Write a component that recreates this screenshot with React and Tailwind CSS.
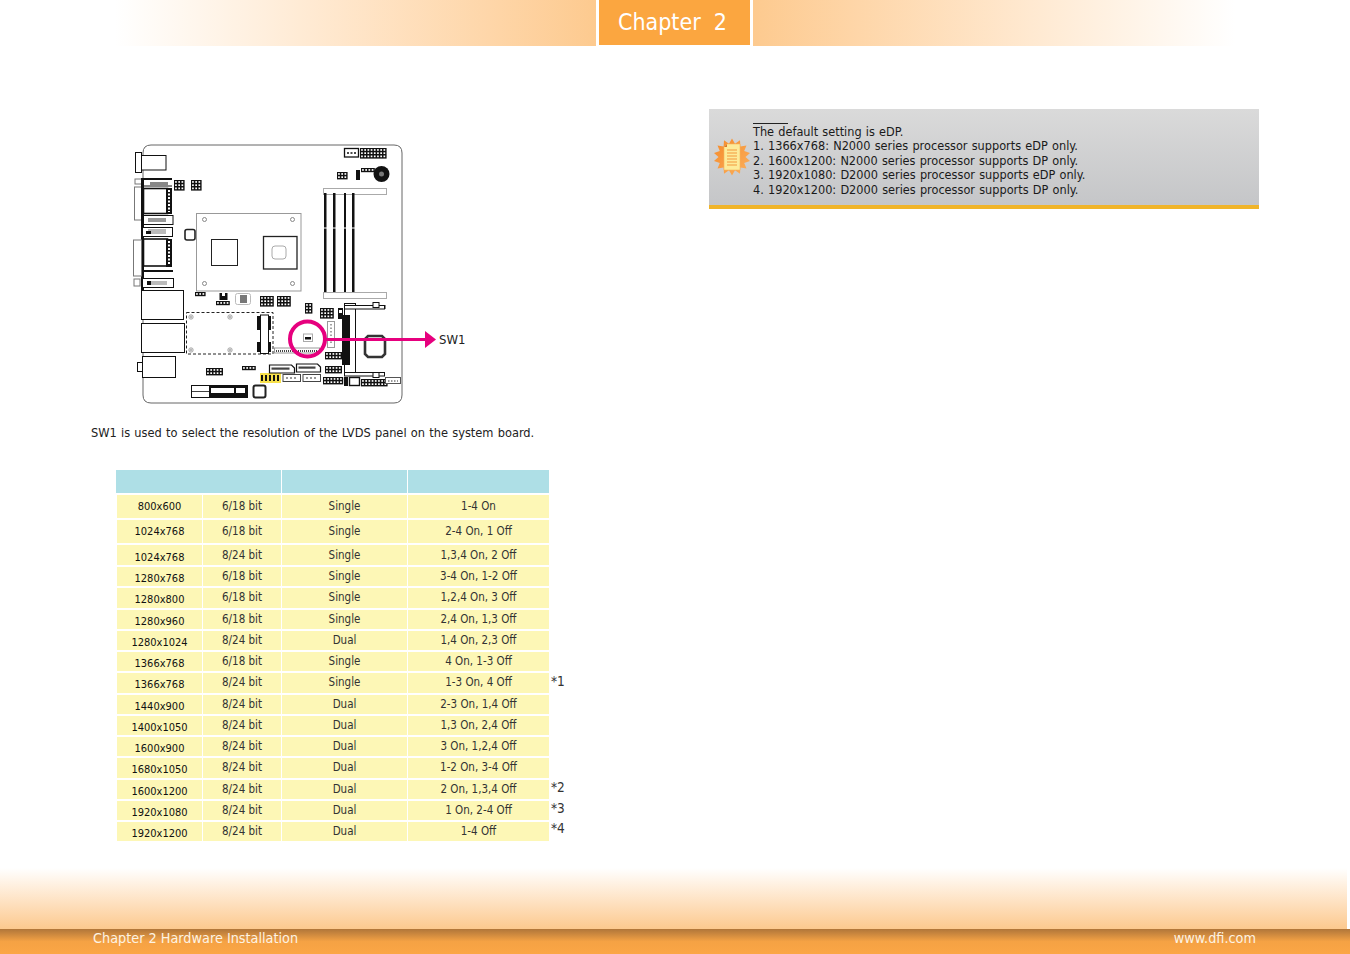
const rows = [
  ["800x600", "6/18 bit", "Single", "1-4 On", "", "h-[23px]", "", ""],
  ["1024x768", "6/18 bit", "Single", "2-4 On, 1 Off", "", "h-[23px]", "", ""],
  ["1024x768", "8/24 bit", "Single", "1,3,4 On, 2 Off", "", "h-[20px]", "pt-[5px]", ""],
  ["1280x768", "6/18 bit", "Single", "3-4 On, 1-2 Off", "", "h-[19.25px]", "pt-[5px]", ""],
  ["1280x800", "6/18 bit", "Single", "1,2,4 On, 3 Off", "", "h-[19.25px]", "pt-[5px]", ""],
  ["1280x960", "6/18 bit", "Single", "2,4 On, 1,3 Off", "", "h-[19.25px]", "pt-[5px]", ""],
  ["1280x1024", "8/24 bit", "Dual", "1,4 On, 2,3 Off", "", "h-[19.25px]", "pt-[5px]", ""],
  ["1366x768", "6/18 bit", "Single", "4 On, 1-3 Off", "", "h-[19.25px]", "pt-[5px]", ""],
  ["1366x768", "8/24 bit", "Single", "1-3 On, 4 Off", "*1", "h-[19.25px]", "pt-[5px]", "-translate-y-[2px]"],
  ["1440x900", "8/24 bit", "Dual", "2-3 On, 1,4 Off", "", "h-[19.25px]", "pt-[5px]", ""],
  ["1400x1050", "8/24 bit", "Dual", "1,3 On, 2,4 Off", "", "h-[19.25px]", "pt-[5px]", ""],
  ["1600x900", "8/24 bit", "Dual", "3 On, 1,2,4 Off", "", "h-[19.25px]", "pt-[5px]", ""],
  ["1680x1050", "8/24 bit", "Dual", "1-2 On, 3-4 Off", "", "h-[19.25px]", "pt-[5px]", ""],
  ["1600x1200", "8/24 bit", "Dual", "2 On, 1,3,4 Off", "*2", "h-[19.25px]", "pt-[5px]", "-translate-y-[2px]"],
  ["1920x1080", "8/24 bit", "Dual", "1 On, 2-4 Off", "*3", "h-[19.25px]", "pt-[5px]", "-translate-y-[2px]"],
  ["1920x1200", "8/24 bit", "Dual", "1-4 Off", "*4", "h-[19.25px]", "pt-[5px]", "-translate-y-[4px]"],
];

const font = "font-['DejaVu_Sans_Condensed','DejaVu_Sans',sans-serif]";

// black pin header with white holes
function Pins({ x, y, cols, rows, p = 3.2 }) {
  const holes = [];
  for (let c = 0; c < cols; c++) {
    for (let r = 0; r < rows; r++) {
      holes.push(<rect key={c + "-" + r} x={x + 1.1 + c * p} y={y + 1.1 + r * p} width={p - 1.5} height={p - 1.5} fill="#fff" />);
    }
  }
  return (
    <g>
      <rect x={x} y={y} width={cols * p + 1} height={rows * p + 1} fill="#111" />
      {holes}
    </g>
  );
}

function Hole({ x, y }) {
  return (
    <g fill="none" stroke="#888" strokeWidth="0.7">
      <circle cx={x} cy={y} r="2.2" />
      <circle cx={x} cy={y} r="1" />
    </g>
  );
}

function Sata({ x, y, w }) {
  return (
    <g>
      <path d={`M${x} ${y}H${x + w - 3}L${x + w} ${y + 3}V${y + 8}H${x}Z`} fill="#fff" stroke="#111" strokeWidth="1.2" />
      <rect x={x + 2} y={y + 2.5} width={w - 7} height="2.2" fill="#444" strokeDasharray="1 1" />
    </g>
  );
}

function Board() {
  return (
    <svg viewBox="130 140 340 270" className="w-[340px] h-[270px] ml-[130px] mt-[94px] shrink-0">
      <path d="M151 145H394Q402 145 402 153V395Q402 403 394 403H151Q143 403 143 395V153Q143 145 151 145Z" fill="#fff" stroke="#666" strokeWidth="1" />

      {/* top edge */}
      <rect x="344.5" y="148.5" width="14" height="8.5" fill="#fff" stroke="#111" strokeWidth="1.3" />
      <path d="M347 153H356" stroke="#111" strokeWidth="1.5" strokeDasharray="2 1.5" />
      <Pins x={360} y={148} cols={8} rows={3} />
      <Pins x={337} y={172} cols={3} rows={2} />
      <rect x="356" y="170" width="4" height="10" fill="#111" />
      <Pins x={361} y={168} cols={4} rows={1} />
      <circle cx="381.5" cy="174" r="8" fill="#111" />
      <circle cx="381.5" cy="174" r="2.5" fill="#777" />

      {/* memory */}
      <rect x="323.5" y="188.5" width="63" height="6" fill="#fff" stroke="#aaa" />
      <rect x="323.5" y="292.5" width="63" height="6" fill="#fff" stroke="#aaa" />
      <rect x="324" y="193" width="2.5" height="99" fill="#111" />
      <rect x="333" y="193" width="2.5" height="99" fill="#111" />
      <rect x="344" y="193" width="2" height="99" fill="#111" />
      <rect x="352" y="193" width="2.5" height="99" fill="#111" />
      <path d="M322 228H356" stroke="#fff" strokeWidth="1" />

      {/* rear io */}
      <rect x="141.5" y="155.5" width="24.5" height="14.5" fill="#fff" stroke="#111" />
      <rect x="135.5" y="152.5" width="6" height="20" fill="#fff" stroke="#111" />
      <rect x="134.5" y="187" width="8" height="33" fill="#fff" stroke="#777" />
      <rect x="135" y="179" width="7" height="5" fill="#fff" stroke="#777" />
      <rect x="143.5" y="188.5" width="24" height="25" fill="#fff" stroke="#111" strokeWidth="1.6" />
      <rect x="166" y="188" width="6" height="26" fill="#111" />
      <path d="M169 190V212" stroke="#fff" strokeWidth="2" strokeDasharray="2 1.5" />
      <rect x="143" y="178" width="29" height="2" fill="#111" />
      <rect x="150" y="182" width="18" height="3" fill="#888" />
      <path d="M143 186H172" stroke="#111" strokeWidth="1" />
      <rect x="142" y="215.5" width="31" height="9" fill="#fff" stroke="#111" />
      <rect x="148" y="218" width="18" height="4" fill="#999" />
      <rect x="141" y="178" width="3" height="112" fill="#111" />
      <rect x="142.5" y="227.5" width="30" height="9" fill="#fff" stroke="#111" />
      <rect x="148" y="229" width="18" height="5" fill="#bbb" />
      <rect x="146" y="231" width="5" height="3" fill="#111" />
      <rect x="133.5" y="240" width="8" height="36" fill="#fff" stroke="#777" />
      <rect x="143.5" y="239" width="24" height="27" fill="#fff" stroke="#111" strokeWidth="1.6" />
      <rect x="166" y="239" width="6" height="28" fill="#111" />
      <path d="M169 241V265" stroke="#fff" strokeWidth="2" strokeDasharray="2 1.5" />
      <rect x="143" y="270" width="30" height="2" fill="#111" />
      <rect x="142.5" y="278.5" width="31" height="9" fill="#fff" stroke="#111" />
      <rect x="147" y="281" width="4" height="4" fill="#111" />
      <rect x="151" y="281" width="16" height="4" fill="#bbb" />
      <rect x="134" y="279" width="6" height="7" fill="#fff" stroke="#777" />
      <Pins x={174} y={180} cols={3} rows={3} />
      <Pins x={191} y={180} cols={3} rows={3} />
      <rect x="185" y="229.5" width="10" height="10.5" rx="2" fill="#fff" stroke="#222" strokeWidth="1.6" />

      {/* cpu area */}
      <rect x="196.5" y="213.5" width="104.5" height="77.5" fill="#fff" stroke="#999" />
      <circle cx="204.5" cy="219.5" r="2" fill="none" stroke="#888" />
      <circle cx="292.5" cy="219.5" r="2" fill="none" stroke="#888" />
      <circle cx="204.5" cy="283.5" r="2" fill="none" stroke="#888" />
      <circle cx="292.5" cy="283.5" r="2" fill="none" stroke="#888" />
      <rect x="211.5" y="239.5" width="26" height="26" fill="#fff" stroke="#222" />
      <rect x="263.5" y="236.5" width="33.5" height="32.5" fill="#fff" stroke="#222" strokeWidth="1.3" />
      <rect x="272" y="246" width="14" height="13" rx="3" fill="#fff" stroke="#aaa" />

      {/* lower io */}
      <rect x="141.5" y="290.5" width="42" height="29" fill="#fff" stroke="#111" />
      <rect x="141.5" y="323.5" width="43" height="29" fill="#fff" stroke="#111" />
      <rect x="142.5" y="356.5" width="33" height="21" fill="#fff" stroke="#111" />
      <rect x="137.5" y="362.5" width="5" height="9" fill="#fff" stroke="#111" />

      {/* mini pcie */}
      <rect x="186.5" y="312.5" width="86.5" height="41.5" fill="#fff" stroke="#222" strokeDasharray="3 2" />
      <Hole x={191} y={317} />
      <Hole x={230} y={317} />
      <Hole x={191} y={350} />
      <Hole x={230} y={350} />
      <rect x="257" y="316" width="14" height="14" fill="#111" />
      <rect x="257" y="342" width="14" height="10" fill="#111" />
      <rect x="260.5" y="315" width="8" height="38.5" fill="#fff" stroke="#111" />

      {/* mid components */}
      <Pins x={195} y={292} cols={3} rows={1} />
      <rect x="219.5" y="293" width="8" height="7" fill="#111" />
      <rect x="222" y="293" width="3" height="3" fill="#fff" />
      <Pins x={216} y={301} cols={4} rows={1} />
      <rect x="235.5" y="293.5" width="15" height="11" rx="2" fill="#fff" stroke="#bbb" />
      <rect x="240" y="295" width="7" height="8" fill="#777" />
      <Pins x={260} y={296} cols={4} rows={3} />
      <Pins x={277} y={296} cols={4} rows={3} />
      <Pins x={305} y={303} cols={2} rows={3} />
      <Pins x={320} y={308} cols={4} rows={3} />
      <rect x="338" y="308" width="5" height="11" fill="#111" />
      <rect x="339" y="310" width="3" height="3" fill="#fff" />
      <rect x="327.5" y="321.5" width="7" height="26" fill="#fff" stroke="#999" />
      <path d="M331 324V345" stroke="#444" strokeDasharray="1.5 2" />
      <Pins x={325} y={352} cols={5} rows={2} />
      <Pins x={325} y={366} cols={5} rows={2} />

      {/* fpc under the circle */}
      <rect x="274.5" y="348" width="45" height="5" fill="#fff" stroke="#999" />
      <path d="M276 351H318" stroke="#444" strokeWidth="2" strokeDasharray="1 1" />

      {/* so-dimm */}
      <rect x="344.5" y="303.5" width="11" height="72" fill="#fff" stroke="#111" />
      <rect x="342" y="315" width="8" height="50" fill="#111" />
      <rect x="344.5" y="305.5" width="40" height="3.5" fill="#fff" stroke="#111" />
      <rect x="344.5" y="372.5" width="40" height="3.5" fill="#fff" stroke="#111" />
      <rect x="373" y="302.5" width="6" height="5" fill="#fff" stroke="#111" />
      <rect x="373" y="372.5" width="6" height="5" fill="#fff" stroke="#111" />
      <rect x="384" y="305" width="1.5" height="4" fill="#111" />
      <path d="M368 336H382L385 339V354L382 357H368L365 354V339Z" fill="#fff" stroke="#333" strokeWidth="2.6" />

      {/* bottom row */}
      <Pins x={206} y={368} cols={5} rows={2} />
      <Pins x={242} y={366} cols={4} rows={1} />
      <rect x="260" y="373" width="21" height="10" fill="#f7e04b" />
      <path d="M262 375V381M266 375V381M270 375V381M274 375V381M278 375V381" stroke="#111" strokeWidth="2" />
      <Sata x={269.5} y={365} w={25} />
      <Sata x={296.5} y={364} w={24} />
      <rect x="283" y="374.5" width="17.5" height="7" fill="#fff" stroke="#444" />
      <rect x="303" y="374.5" width="17.5" height="7" fill="#fff" stroke="#444" />
      <path d="M286 378H298M306 378H318" stroke="#333" strokeWidth="1.2" strokeDasharray="2 2" />
      <Pins x={323} y={377} cols={6} rows={2} />
      <rect x="344" y="377" width="4" height="9" fill="#111" />
      <rect x="349.5" y="377.5" width="10" height="8" fill="#fff" stroke="#111" strokeWidth="1.4" />
      <Pins x={361} y={379} cols={8} rows={2} />
      <rect x="385.5" y="377.5" width="15" height="6" fill="#fff" stroke="#555" />
      <path d="M388 381H398" stroke="#333" strokeWidth="1" strokeDasharray="1.5 1.5" />
      <rect x="191.5" y="385.5" width="18" height="12" fill="#fff" stroke="#111" />
      <path d="M192 391.5H209" stroke="#111" strokeWidth="0.8" />
      <rect x="209" y="385" width="39" height="13" fill="#111" />
      <rect x="211" y="388" width="23" height="5" fill="#fff" />
      <rect x="236" y="388" width="9" height="5" fill="#fff" />
      <rect x="253.5" y="385.5" width="12" height="12" rx="2" fill="#fff" stroke="#222" strokeWidth="2" />

      {/* SW1 callout */}
      <rect x="303.5" y="334" width="9" height="7.5" fill="#fff" stroke="#aaa" />
      <rect x="305" y="337" width="6" height="2.5" fill="#111" />
      <circle cx="307.5" cy="339" r="17.5" fill="none" stroke="#e6007e" strokeWidth="4" />
      <rect x="326" y="338" width="100" height="3" fill="#e6007e" />
      <path d="M425 331L436 339.5L425 348Z" fill="#e6007e" />
      <text x="439" y="344" fontSize="13" fill="#222" className={font}>SW1</text>
    </svg>
  );
}

function NoteIcon() {
  const pts = [];
  for (let i = 0; i < 28; i++) {
    const r = i % 2 === 0 ? 18.5 : 13.5;
    const a = (i / 28) * Math.PI * 2 - Math.PI / 2;
    pts.push((20 + r * Math.cos(a)).toFixed(1) + "," + (20 + r * Math.sin(a)).toFixed(1));
  }
  return (
    <svg viewBox="0 0 40 40" className="w-[40px] h-[40px] shrink-0">
      <defs>
        <linearGradient id="burst" x1="0" y1="0" x2="1" y2="1">
          <stop offset="0" stopColor="#f58a2a" />
          <stop offset="1" stopColor="#fbb05e" />
        </linearGradient>
      </defs>
      <polygon points={pts.join(" ")} fill="url(#burst)" />
      <path d="M15 7H28V33H12V10Z" fill="#fdeb9a" stroke="#f7b65a" strokeWidth="0.6" />
      <path d="M15 7V10H12Z" fill="#d9792c" />
      <path d="M15 13H25M15 16H25M15 19H25M15 22H25M15 25H25M15 28H25" stroke="#f39a3d" strokeWidth="1.2" />
    </svg>
  );
}

export default function App() {
  return (
    <div className={`w-[1350px] h-[954px] flex flex-col overflow-hidden bg-white ${font}`}>
      <header className="flex h-[46px] pl-[115px] shrink-0">
        <div className="w-[481px] h-[46px] bg-gradient-to-r from-white to-[#fdca8f]" />
        <div className="w-[151px] h-[45px] ml-[3px] pr-[4px] bg-[#fba640] flex items-center justify-center text-white text-[23px]">
          Chapter&nbsp; 2
        </div>
        <div className="w-[482px] h-[46px] ml-[3px] bg-gradient-to-l from-white to-[#fdca8f]" />
      </header>

      <main className="flex flex-1">
        <section className="w-[709px] shrink-0">
          <Board />
          <p className="ml-[91px] mt-[14px] text-[12.7px] [word-spacing:0.6px] leading-[18px] text-[#222] whitespace-pre">SW1 is used to select the resolution of the LVDS panel on the system board.</p>
          <div className="ml-[116px] mt-[28px] w-[460px] text-[11.5px] leading-[14px] text-[#333]">
            <div className="grid grid-cols-[165px_125px_141px] gap-x-[1px] h-[23px] bg-white">
              <div className="bg-[#aedfe6]" />
              <div className="bg-[#aedfe6]" />
              <div className="bg-[#aedfe6]" />
            </div>
            <div className="flex flex-col gap-[2px] mt-[2px] ml-[1px]">
              {rows.map((r, i) => (
                <div key={i} className={`grid grid-cols-[85px_78px_125px_141px_30px] gap-x-[1px] ${r[5]}`}>
                  <div className={`bg-[#fdf7b6] flex items-center justify-center text-[11px] text-[#111] ${r[6]}`}>{r[0]}</div>
                  <div className="bg-[#fdf7b6] flex items-center justify-center pb-[1px]">{r[1]}</div>
                  <div className="bg-[#fdf7b6] flex items-center justify-center pb-[1px]">{r[2]}</div>
                  <div className="bg-[#fdf7b6] flex items-center justify-center pb-[1px]">{r[3]}</div>
                  <div className={`flex items-center pl-[1px] text-[13.5px] ${r[7]}`}>{r[4]}</div>
                </div>
              ))}
            </div>
          </div>
        </section>

        <aside className="w-[550px] mt-[63px]">
          <div className="h-[100px] bg-gradient-to-b from-[#dadada] to-[#c5c6c8] border-b-4 border-[#f0b429] flex items-center pl-[3px]">
            <NoteIcon />
            <div className="ml-[1px] pt-[6px] text-[12.6px] [word-spacing:0.6px] leading-[14.5px] text-[#1a1a1a] whitespace-pre">
              <div className="w-[35px] border-t border-[#222] mb-[1px]" />
              <div>The default setting is eDP.</div>
              <div>1. 1366x768: N2000 series processor supports eDP only.</div>
              <div>2. 1600x1200: N2000 series processor supports DP only.</div>
              <div>3. 1920x1080: D2000 series processor supports eDP only.</div>
              <div>4. 1920x1200: D2000 series processor supports DP only.</div>
            </div>
          </div>
        </aside>
      </main>

      <footer className="shrink-0">
        <div className="w-[1347px] h-[61px] bg-gradient-to-b from-white to-[#fcc98e]" />
        <div className="h-[25px] bg-gradient-to-b from-[#b0763a] via-[#f5a244] via-50% to-[#fba645] flex items-center justify-between pl-[93px] pr-[94px] pb-[6px] text-[14.3px] text-[#fdf3e3]">
          <span>Chapter 2 Hardware Installation</span>
          <span>www.dfi.com</span>
        </div>
      </footer>
    </div>
  );
}
